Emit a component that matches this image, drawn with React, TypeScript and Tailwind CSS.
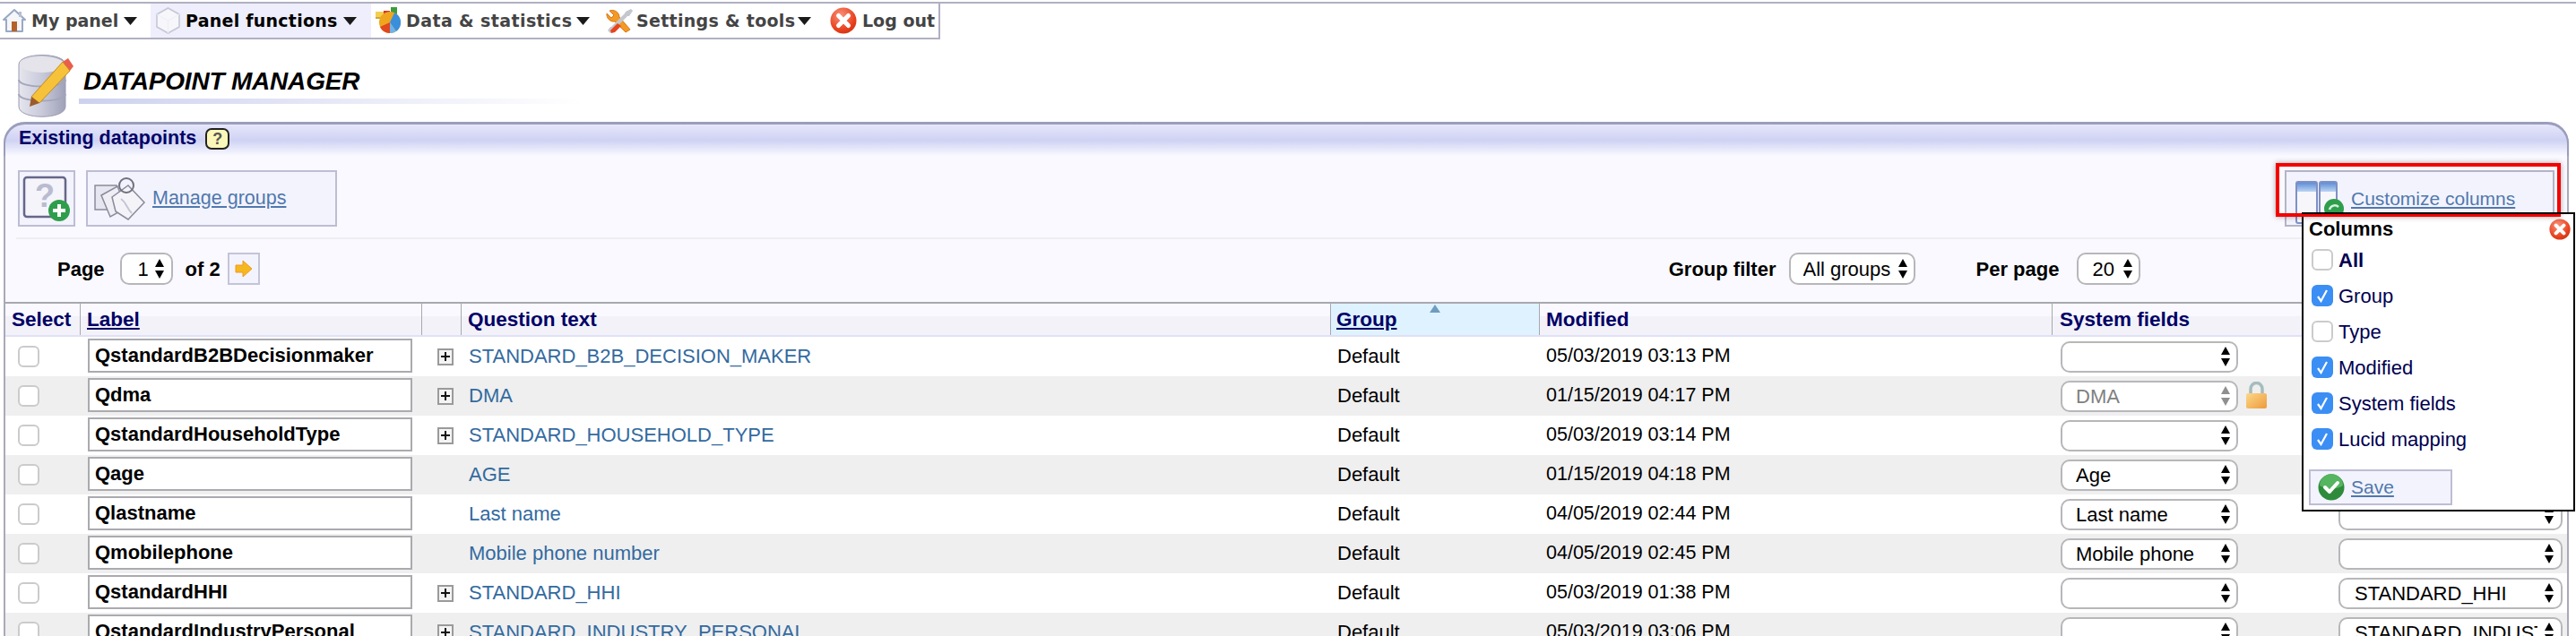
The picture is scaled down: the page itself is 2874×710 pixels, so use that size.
import React from "react";

const Arrows = ({ dim }: { dim?: boolean }) => (
  <svg width="12" height="24" viewBox="0 0 12 24" className="shrink-0">
    <path d="M6 1 L11 10 H1 Z M6 23 L11 14 H1 Z" fill={dim ? "#8f8f8f" : "#000"} />
  </svg>
);

const Sel = ({ text, disabled, className }: { text?: string; disabled?: boolean; className: string }) => (
  <div className={`flex items-center gap-[7px] bg-white border-2 border-[#b7b7bb] rounded-[10px] shrink-0 ${className}`}>
    <div className={`flex-1 min-w-0 overflow-hidden whitespace-nowrap text-[22px] ${disabled ? "text-[#808080]" : "text-black"}`}>{text}</div>
    <Arrows dim={disabled} />
  </div>
);

const Caret = () => (
  <svg width="15" height="9" viewBox="0 0 15 9" className="shrink-0"><path d="M0 0H15L7.5 9Z" fill="#1a1a1a" /></svg>
);

const HomeIcon = () => (
  <svg width="26" height="28" viewBox="0 0 26 28" className="shrink-0">
    <path d="M13 2 L25 13 L22 13 V26 H4 V13 H1 Z" fill="#f4f6fa" stroke="#9aa8c4" strokeWidth="2" strokeLinejoin="round" />
    <rect x="10" y="15" width="6" height="11" fill="#b5622a" />
    <rect x="18" y="4" width="3" height="6" fill="#b4bfd4" />
  </svg>
);
const CubeIcon = () => (
  <svg width="27" height="30" viewBox="0 0 27 30" className="shrink-0">
    <path d="M13.5 1 L26 8 V22 L13.5 29 L1 22 V8 Z" fill="#f7f7fb" stroke="#c4c8d4" strokeWidth="1.6" />
    <path d="M1 8 L13.5 15 L26 8 M13.5 15 V29" fill="none" stroke="#eef0f5" strokeWidth="1.2" />
  </svg>
);
const DataIcon = () => (
  <svg width="30" height="30" viewBox="0 0 30 30" className="shrink-0">
    <rect x="18" y="0" width="7" height="12" fill="#3f9b3c" />
    <rect x="10" y="4" width="7" height="10" fill="#d9342a" />
    <rect x="1" y="5" width="9" height="7" fill="#f3cf4f" />
    <rect x="1" y="11" width="12" height="2" fill="#c9a93c" />
    <circle cx="17" cy="17" r="12" fill="#f0a51e" />
    <path d="M17 17 L17 29 A12 12 0 0 1 6 22 Z" fill="#e0481f" />
    <path d="M17 17 L22 6.200 A12 12 0 0 1 24 27 Z" fill="#3a8fdc" />
    <path d="M17 17 L17 29 A12 12 0 0 0 24 27 Z" fill="#6cb3ea" />
  </svg>
);
const ToolsIcon = () => (
  <svg width="31" height="29" viewBox="0 0 31 29" className="shrink-0">
    <path d="M4 3 L9 8 L6 11 L1 6 A8 8 0 0 0 10 15 L22 27 L27 24 L15 10 A8 8 0 0 0 4 3 Z" fill="#f29a24" stroke="#d9761a" strokeWidth="1" />
    <path d="M28 1 L30 3 L26 9 L24 9 L9 24 L10 25 L5 28 L2 25 L5 21 L6 21 L21 6 L22 4 Z" fill="#c4c7cc" />
    <path d="M13 17 L5 25 L6 28 L10 27 L17 20 Z" fill="#e8431f" />
  </svg>
);
const XIcon = ({ size }: { size: number }) => (
  <svg width={size} height={size} viewBox="0 0 30 30" className="shrink-0">
    <defs>
      <radialGradient id="xg" cx="0.4" cy="0.3" r="0.8">
        <stop offset="0" stopColor="#f9917a" />
        <stop offset="0.7" stopColor="#e8401c" />
        <stop offset="1" stopColor="#c9300f" />
      </radialGradient>
    </defs>
    <circle cx="15" cy="15" r="14.5" fill="url(#xg)" />
    <path d="M9.500 9.500 L20.500 20.500 M20.500 9.500 L9.500 20.500" stroke="#fff" strokeWidth="5" strokeLinecap="round" />
  </svg>
);
const DbIcon = () => (
  <svg width="66" height="71" viewBox="0 0 66 71" className="shrink-0">
    <defs>
      <linearGradient id="db" x1="0" x2="1" y1="0" y2="0">
        <stop offset="0" stopColor="#e6e6ee" />
        <stop offset="0.5" stopColor="#c8c9da" />
        <stop offset="1" stopColor="#9fa1b8" />
      </linearGradient>
    </defs>
    <path d="M3 12 C3 -2 55 -2 55 12 V59 C55 74 3 74 3 59 Z" fill="url(#db)" stroke="#9a9cb0" strokeWidth="1" />
    <ellipse cx="29" cy="12" rx="25" ry="9" fill="#e4e4ea" />
    <path d="M3 29 C3 39 55 39 55 29 M3 45 C3 55 55 55 55 45" fill="none" stroke="#a3a5ba" strokeWidth="2" />
    <path d="M17 48 L26 55 L60 19 L52 9 Z" fill="#f5c23a" stroke="#c98a1c" strokeWidth="1" />
    <path d="M17 48 L26 55 L15 59 Z" fill="#9b5b2a" />
    <path d="M52 9 L60 19 L64 14 L58 5 Z" fill="#e8604a" />
  </svg>
);
const HelpIcon = () => (
  <div className="w-[27px] h-[24px] rounded-[7px] border-2 border-[#222] bg-[#fbf7b8] flex items-center justify-center text-[18px] font-bold text-[#555] leading-none ml-[10px]">?</div>
);
const AddQIcon = () => (
  <svg width="54" height="52" viewBox="0 0 54 52">
    <rect x="2" y="2" width="46" height="44" rx="3" fill="#f4f4fa" stroke="#66668a" strokeWidth="2.500" />
    <text x="14" y="35" fontSize="36" fontWeight="700" fill="#b9bbd0" fontFamily="Liberation Sans">?</text>
    <circle cx="41" cy="39" r="12" fill="#2f9e4c" />
    <path d="M41 32 V46 M34 39 H48" stroke="#fff" strokeWidth="4" />
  </svg>
);
const TagsIcon = () => (
  <svg width="58" height="52" viewBox="0 0 58 52" className="shrink-0">
    <rect x="1" y="11" width="24" height="27" fill="#e6e6f0" stroke="#8a8a9c" strokeWidth="1.500" />
    <path d="M8 22 L26 12 L36 36 L18 46 Z" fill="#eeeef4" stroke="#8a8a9c" strokeWidth="1.500" />
    <path d="M20 24 L38 11 L56 30 L38 49 L24 40 Z" fill="#f4f4f8" stroke="#8a8a9c" strokeWidth="1.500" />
    <circle cx="36" cy="11" r="8" fill="none" stroke="#707080" strokeWidth="2" />
    <path d="M30 26 C36 30 36 36 42 42" fill="none" stroke="#c4c6d4" strokeWidth="2" />
  </svg>
);
const NextArrow = () => (
  <svg width="20" height="20" viewBox="0 0 20 20">
    <path d="M1 6 H9 V1 L19 10 L9 19 V14 H1 Z" fill="#f6b820" stroke="#ee9a1e" strokeWidth="1" />
  </svg>
);
const PlusBox = () => (
  <div className="w-[18px] h-[19px] border-2 border-[#9a9a9a] bg-[#f4f4f4] flex items-center justify-center shrink-0">
    <svg width="10" height="10" viewBox="0 0 10 10"><path d="M5 0V10M0 5H10" stroke="#111" strokeWidth="2" /></svg>
  </div>
);
const Lock = () => (
  <svg width="25" height="31" viewBox="0 0 25 31" className="shrink-0 ml-[8px] -mt-[2px]">
    <defs>
      <linearGradient id="lk" x1="0" x2="1" y1="0" y2="1">
        <stop offset="0" stopColor="#fcd88a" />
        <stop offset="1" stopColor="#ee9a3a" />
      </linearGradient>
    </defs>
    <path d="M6 14 V8 A6.500 6.500 0 0 1 19 8 V14" fill="none" stroke="#a6bcbc" strokeWidth="3.500" />
    <rect x="1" y="13" width="23" height="17" rx="2" fill="url(#lk)" />
  </svg>
);
const ColsIcon = () => (
  <svg width="54" height="48" viewBox="0 0 54 48" className="shrink-0">
    <defs>
      <linearGradient id="ch" x1="0" x2="0" y1="0" y2="1">
        <stop offset="0" stopColor="#5f8fd8" />
        <stop offset="1" stopColor="#bcd4f2" />
      </linearGradient>
    </defs>
    <rect x="1" y="1" width="23" height="46" rx="2" fill="#f7f7fb" stroke="#7f90c4" strokeWidth="2" />
    <rect x="2" y="2" width="21" height="10" fill="url(#ch)" />
    <rect x="27" y="1" width="19" height="46" rx="2" fill="#f7f7fb" stroke="#7f90c4" strokeWidth="2" />
    <rect x="28" y="2" width="17" height="10" fill="url(#ch)" />
    <circle cx="43" cy="31" r="11" fill="#2f9e4c" />
    <path d="M38 32 A6 6 0 0 1 48 29" fill="none" stroke="#d4f2dc" strokeWidth="2.500" />
  </svg>
);
const SaveIcon = () => (
  <svg width="30" height="30" viewBox="0 0 30 30" className="shrink-0">
    <circle cx="15" cy="15" r="14.500" fill="#2e8b3c" />
    <path d="M2 13 A13 13 0 0 1 28 13 C20 18 10 18 2 13 Z" fill="#55b560" />
    <path d="M8 15 L13 20 L22 10" fill="none" stroke="#fff" strokeWidth="4" strokeLinecap="round" strokeLinejoin="round" />
  </svg>
);
const Check = ({ on }: { on?: boolean }) =>
  on ? (
    <div className="w-[24px] h-[24px] rounded-[6px] bg-[#3b8ef3] flex items-center justify-center shrink-0">
      <svg width="14" height="16" viewBox="0 0 14 16"><path d="M2 9 L5.500 14 L12 2" fill="none" stroke="#fff" strokeWidth="2.200" /></svg>
    </div>
  ) : (
    <div className="w-[24px] h-[24px] rounded-[6px] bg-white border-2 border-[#cbcbcb] shrink-0" />
  );

const menu = [
  { w: "w-[168px]", pl: "pl-[3px]", gap: "gap-[6px]", icon: <HomeIcon />, text: "My panel", caret: true, tr: "" },
  { w: "w-[246px]", pl: "pl-[6px]", gap: "gap-[6px]", icon: <CubeIcon />, text: "Panel functions", caret: true, active: true, tr: "tracking-[0.25px]" },
  { w: "w-[253px]", pl: "pl-[4px]", gap: "gap-[5px]", icon: <DataIcon />, text: "Data & statistics", caret: true, tr: "tracking-[0.4px]" },
  { w: "w-[250px]", pl: "pl-[9px]", gap: "gap-[3px]", icon: <ToolsIcon />, text: "Settings & tools", caret: true, tr: "tracking-[0.3px]" },
  { w: "w-[130px]", pl: "pl-[9px]", gap: "gap-[6px]", icon: <XIcon size={30} />, text: "Log out", caret: false, tr: "" },
];

const rows = [
  ["QstandardB2BDecisionmaker", true, "STANDARD_B2B_DECISION_MAKER", "05/03/2019 03:13 PM", "", ""],
  ["Qdma", true, "DMA", "01/15/2019 04:17 PM", "DMA", ""],
  ["QstandardHouseholdType", true, "STANDARD_HOUSEHOLD_TYPE", "05/03/2019 03:14 PM", "", ""],
  ["Qage", false, "AGE", "01/15/2019 04:18 PM", "Age", ""],
  ["Qlastname", false, "Last name", "04/05/2019 02:44 PM", "Last name", ""],
  ["Qmobilephone", false, "Mobile phone number", "04/05/2019 02:45 PM", "Mobile phone", ""],
  ["QstandardHHI", true, "STANDARD_HHI", "05/03/2019 01:38 PM", "", "STANDARD_HHI"],
  ["QstandardIndustryPersonal", true, "STANDARD_INDUSTRY_PERSONAL", "05/03/2019 03:06 PM", "", "STANDARD_INDUSTRY_PERSONAL"],
] as [string, boolean, string, string, string, string][];

const cols = [
  ["All", false, true],
  ["Group", true, false],
  ["Type", false, false],
  ["Modified", true, false],
  ["System fields", true, false],
  ["Lucid mapping", true, false],
] as [string, boolean, boolean][];

const thBase = "h-full flex items-center shrink-0 border-l border-[#a8a8b0] text-[22.5px] font-bold text-[#000066]";

export default function App() {
  return (
    <div className="relative w-[2874px] h-[710px] overflow-hidden bg-white font-['Liberation_Sans',Arial,sans-serif] text-black">
      {/* menu */}
      <div className="mt-[2px] border-t-2 border-[#b0b0c2]">
        <div className="flex w-[1049px] h-[40px] border-b-2 border-r-2 border-[#b0b0c2] font-['DejaVu_Sans',sans-serif] text-[19px] font-bold">
          {menu.map((m) => (
            <div key={m.text} className={`flex items-center h-full shrink-0 ${m.w} ${m.pl} ${m.gap} ${m.active ? "bg-[#eeeefc] text-black" : "text-[#444444]"}`}>
              {m.icon}
              <span className={`whitespace-nowrap ${m.tr}`}>{m.text}</span>
              {m.caret && <Caret />}
            </div>
          ))}
        </div>
      </div>
      {/* title */}
      <div className="flex h-[92px] pl-[18px] pt-[16px]">
        <DbIcon />
        <div className="ml-[4px] w-[562px]">
          <div className="pl-[5px] pt-[15px] h-[50px] text-[28px] leading-[32px] font-bold italic tracking-[-0.2px]">DATAPOINT MANAGER</div>
          <div className="h-[6px] bg-[linear-gradient(90deg,#cdd1ee,#ffffff)]" />
        </div>
      </div>
      {/* panel */}
      <div className="ml-[4px] w-[2862px] h-[600px] border-x-2 border-[#a9a9b8] rounded-t-[24px] bg-[#f9f9ff]">
        <div className="h-[38px] -mx-[2px] rounded-t-[24px] border-t-[3px] border-x-2 border-[#9b9dbc] bg-[linear-gradient(180deg,#e6e7fb_0%,#cfd2f3_50%,#f9f9ff_100%)] flex items-center pl-[15px] pb-[4px]">
          <span className="text-[21.5px] font-bold text-[#000066]">Existing datapoints</span>
          <HelpIcon />
        </div>
        {/* toolbar */}
        <div className="flex justify-between pt-[16px] pl-[14px] pr-[14px] h-[91px]">
          <div className="flex gap-[12px]">
            <div className="w-[64px] h-[63px] border-2 border-[#bdbdd4] bg-[#f3f3fd] flex items-center justify-center"><AddQIcon /></div>
            <div className="w-[280px] h-[63px] border-2 border-[#bdbdd4] bg-[#f3f3fd] flex items-center pl-[7px] gap-[7px]">
              <TagsIcon />
              <span className="text-[21.5px] text-[#4f78ad] underline">Manage groups</span>
            </div>
          </div>
          <div className="w-[301px] h-[63px] border-2 border-[#b4b4c8] bg-[#f3f3fd] flex items-start pl-[10px] pt-[10px] gap-[8px]">
            <ColsIcon />
            <span className="text-[21px] text-[#4f78ad] underline mt-[4px]">Customize columns</span>
          </div>
        </div>
        <div className="mx-[12px] h-[2px] bg-[#eeeef2]" />
        {/* page row */}
        <div className="flex items-center h-[70px] pb-[4px] text-[22px]">
          <span className="ml-[58px] font-bold">Page</span>
          <Sel text="1" className="ml-[17px] w-[59px] h-[36px] pl-[18px] pr-[7px] gap-[2px]" />
          <span className="ml-[14px] font-bold">of 2</span>
          <div className="ml-[8px] w-[36px] h-[36px] border-2 border-[#c4c4d8] bg-[#f3f3fd] flex items-center justify-center"><NextArrow /></div>
          <span className="ml-[1572px] font-bold">Group filter</span>
          <Sel text="All groups" className="ml-[14px] w-[141px] h-[36px] pl-[14px] pr-[6px] !gap-[2px]" />
          <span className="ml-[68px] font-bold">Per page</span>
          <Sel text="20" className="ml-[20px] w-[71px] h-[36px] pl-[15px] pr-[6px] !gap-[2px]" />
        </div>
        {/* table */}
        <div className="h-[39px] border-t-2 border-b-2 border-t-[#a8a8b0] border-b-[#e0e0f8] bg-[linear-gradient(180deg,#f9f9ff_0%,#f9f9ff_40%,#f2f2f8_40%,#f2f2f8_100%)] flex">
          <div className={`${thBase} w-[83px] pl-[7px] border-l-0`}>Select</div>
          <div className={`${thBase} w-[381px] pl-[7px]`}><span className="underline">Label</span></div>
          <div className={`${thBase} w-[44px]`} />
          <div className={`${thBase} w-[970px] pl-[7px]`}>Question text</div>
          <div className={`${thBase} relative w-[233px] pl-[6px] bg-[#def3ff]`}>
            <span className="underline">Group</span>
            <svg width="12" height="9" viewBox="0 0 12 9" className="absolute left-[110px] top-[1px]"><path d="M6 0L12 9H0Z" fill="#6f9cc0" /></svg>
          </div>
          <div className={`${thBase} w-[572px] pl-[7px]`}>Modified</div>
          <div className={`${thBase} w-[310px] pl-[8px]`}>System fields</div>
          <div className={`${thBase} flex-1`} />
        </div>
        {rows.map((r, i) => (
          <div key={r[0]} className={`flex items-center h-[44px] ${i % 2 ? "bg-[#efefef]" : "bg-white"}`}>
            <div className="w-[83px] shrink-0 pl-[14px]"><Check /></div>
            <div className="w-[381px] shrink-0 pl-[9px]">
              <div className="w-[362px] h-[38px] -mt-[2px] border-2 border-[#aaaab0] bg-white flex items-center pl-[6px] pb-[1px] text-[22px] font-bold whitespace-nowrap">{r[0]}</div>
            </div>
            <div className="w-[44px] shrink-0 pl-[18px]">{r[1] && <PlusBox />}</div>
            <div className="w-[970px] shrink-0 pl-[9px] pb-[2px] text-[22px] text-[#336a9f]">{r[2]}</div>
            <div className="w-[233px] shrink-0 pl-[8px] pb-[2px] text-[22px]">Default</div>
            <div className="w-[572px] shrink-0 pl-[8px] pb-[2px] text-[21.5px]">{r[3]}</div>
            <div className="w-[320px] shrink-0 pl-[10px] flex items-center">
              <Sel text={r[4]} disabled={r[0] === "Qdma"} className="w-[198px] h-[35px] pl-[15px] pr-[6px]" />
              {r[0] === "Qdma" && <Lock />}
            </div>
            <Sel text={r[5]} className="w-[250px] h-[35px] pl-[16px] pr-[7px]" />
          </div>
        ))}
      </div>
      {/* popup */}
      <div className="absolute left-[2568px] top-[237px] w-[305px] h-[334px] border-2 border-black bg-white pt-[2px] pl-[6px]">
        <div className="h-[29px] text-[22px] font-bold leading-[29px]">Columns</div>
        <div className="absolute right-[3px] top-[5px]"><XIcon size={24} /></div>
        <div className="pl-[3px]">
          {cols.map((c) => (
            <div key={c[0]} className="flex items-center h-[40px] gap-[6px]">
              <Check on={c[1]} />
              <span className={`text-[22px] text-[#000050] ${c[2] ? "font-bold" : ""}`}>{c[0]}</span>
            </div>
          ))}
        </div>
        <div className="mt-[14px] w-[160px] h-[40px] border-2 border-[#bdbdd4] bg-[#f3f3fd] flex items-center pl-[8px] gap-[7px]">
          <SaveIcon />
          <span className="text-[21px] text-[#4f78ad] underline">Save</span>
        </div>
      </div>
      {/* red highlight */}
      <div className="absolute left-[2539px] top-[182px] w-[318px] h-[60px] border-4 border-[#f50000] shadow-[0_0_6px_rgba(0,0,0,0.35)] pointer-events-none" />
      <div className="absolute left-[2568px] top-[237px] w-[289px] h-[2px] bg-black" />
    </div>
  );
}
